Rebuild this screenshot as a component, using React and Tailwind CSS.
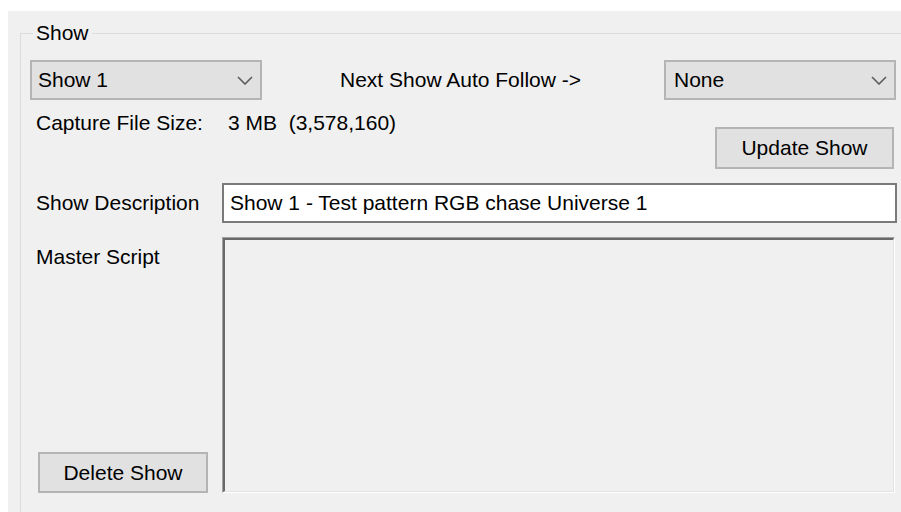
function Chevron() {
  return (
    <svg width="16" height="9" viewBox="0 0 16 9" className="shrink-0">
      <polyline points="1,1 8,8 15,1" fill="none" stroke="#5c5c5c" strokeWidth="1.6" />
    </svg>
  )
}

function ComboBox({ value, className = '' }) {
  return (
    <div
      className={`flex h-[40px] w-[232px] items-center justify-between border-2 border-[#b4b4b4] bg-[#e1e1e1] pr-[7px] ${className}`}
    >
      <span>{value}</span>
      <Chevron />
    </div>
  )
}

function Button({ children, className = '' }) {
  return (
    <button
      type="button"
      className={`flex items-center justify-center border-2 border-[#b4b4b4] bg-[#e1e1e1] text-black ${className}`}
    >
      {children}
    </button>
  )
}

export default function App() {
  return (
    <div className="h-screen min-h-[512px] w-full min-w-[901px] overflow-hidden bg-white pl-[8px] pt-[11px] font-['Liberation_Sans',Arial,sans-serif] text-[21px] leading-[24px] text-black">
      <div className="h-full w-full overflow-hidden bg-[#f0f0f0] pl-[12px] pt-[22px]">
        {/* group box: only top and left edges fall inside the frame */}
        <div className="relative h-[520px] border-l border-t border-[#dcdcdc] pt-[26px]">
          <span className="absolute -top-[13px] left-[12px] bg-[#f0f0f0] px-[3px]">Show</span>

          <div className="flex h-[40px] w-[875px] items-center">
            <ComboBox value="Show 1" className="ml-[9px] pl-[6px]" />
            <span className="ml-[78px]">Next Show Auto Follow -&gt;</span>
            <ComboBox value="None" className="ml-auto pl-[8px]" />
          </div>

          <div className="flex w-[875px] items-start justify-between">
            <div className="mt-[11px] flex pl-[15px]">
              <span className="w-[192px]">Capture File Size:</span>
              <span className="whitespace-pre">3 MB  (3,578,160)</span>
            </div>
            <Button className="mr-[2px] mt-[27px] h-[42px] w-[179px]">Update Show</Button>
          </div>

          <div className="mt-[14px] flex w-[876px] items-center">
            <span className="w-[201px] shrink-0 pl-[15px]">Show Description</span>
            <div className="flex h-[40px] flex-1 items-center border-2 border-[#7a7a7a] bg-white pl-[6px]">
              Show 1 - Test pattern RGB chase Universe 1
            </div>
          </div>

          <div className="mt-[14px] flex h-[256px] w-[874px]">
            <div className="flex w-[201px] shrink-0 flex-col justify-between">
              <span className="mt-[8px] pl-[15px]">Master Script</span>
              <Button className="ml-[17px] h-[41px] w-[170px]">Delete Show</Button>
            </div>
            <div className="flex-1 border border-b-white border-l-[#a0a0a0] border-r-white border-t-[#a0a0a0]">
              <div className="h-full w-full border-b border-l-2 border-r border-t-2 border-b-[#e3e3e3] border-l-[#696969] border-r-[#e3e3e3] border-t-[#696969] bg-[#f0f0f0]" />
            </div>
          </div>
        </div>
      </div>
    </div>
  )
}
